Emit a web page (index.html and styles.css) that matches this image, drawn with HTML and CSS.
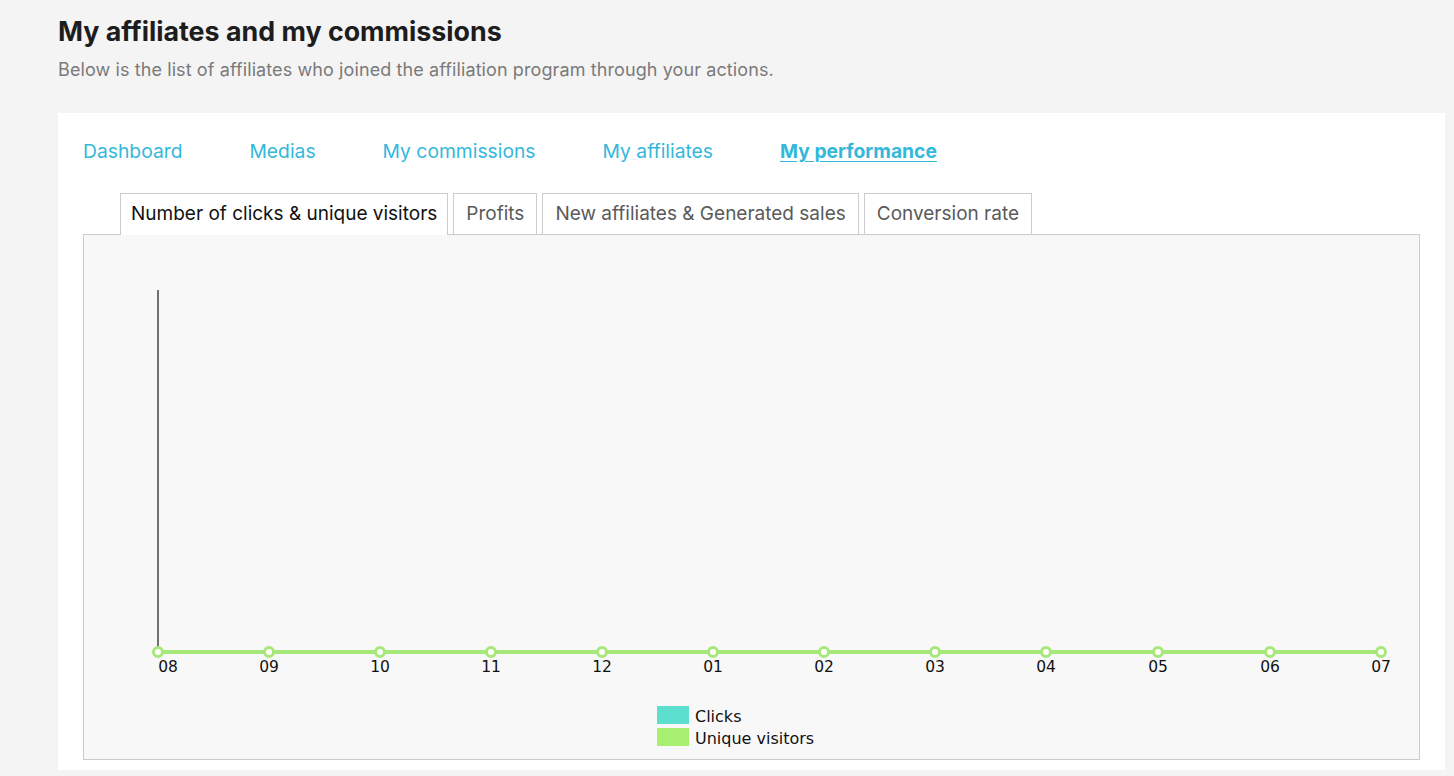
FILE: index.html
```html
<!DOCTYPE html>
<html lang="en">
<head>
<meta charset="utf-8">
<title>My affiliates and my commissions</title>
<link rel="stylesheet" href="styles.css">
</head>
<body>
<div class="page">
  <header class="page-head">
    <h1 class="page-title">My affiliates and my commissions</h1>
    <p class="page-sub">Below is the list of affiliates who joined the affiliation program through your actions.</p>
  </header>

  <section class="card">
    <nav class="main-nav">
      <a class="nav-link" href="#">Dashboard</a>
      <a class="nav-link" href="#">Medias</a>
      <a class="nav-link" href="#">My commissions</a>
      <a class="nav-link" href="#">My affiliates</a>
      <a class="nav-link active" href="#">My performance</a>
    </nav>

    <div class="tabs">
      <span class="tab active">Number of clicks &amp; unique visitors</span>
      <span class="tab">Profits</span>
      <span class="tab">New affiliates &amp; Generated sales</span>
      <span class="tab">Conversion rate</span>
    </div>

    <div class="chart-box">
      <svg class="chart" width="1334" height="524" viewBox="0 0 1334 524">
        <!-- y axis -->
        <line x1="74" y1="55" x2="74" y2="417" stroke="#444" stroke-width="1.5"/>
        <!-- clicks series (flat, hidden under visitors) -->
        <polyline fill="none" stroke="#5ddfd0" stroke-width="4"
          points="74,417 185,417 296,417 407,417 518,417 629,417 740,417 851,417 962,417 1074,417 1186,417 1297,417"/>
        <!-- unique visitors series -->
        <polyline fill="none" stroke="#a6e87a" stroke-width="4"
          points="74,417 185,417 296,417 407,417 518,417 629,417 740,417 851,417 962,417 1074,417 1186,417 1297,417"/>
        <g fill="#fff" stroke="#a6e87a" stroke-width="3">
          <circle cx="74" cy="417" r="4.5"/>
          <circle cx="185" cy="417" r="4.5"/>
          <circle cx="296" cy="417" r="4.5"/>
          <circle cx="407" cy="417" r="4.5"/>
          <circle cx="518" cy="417" r="4.5"/>
          <circle cx="629" cy="417" r="4.5"/>
          <circle cx="740" cy="417" r="4.5"/>
          <circle cx="851" cy="417" r="4.5"/>
          <circle cx="962" cy="417" r="4.5"/>
          <circle cx="1074" cy="417" r="4.5"/>
          <circle cx="1186" cy="417" r="4.5"/>
          <circle cx="1297" cy="417" r="4.5"/>
        </g>
        <g class="axis-labels" text-anchor="middle">
          <text x="84" y="437">08</text>
          <text x="185" y="437">09</text>
          <text x="296" y="437">10</text>
          <text x="407" y="437">11</text>
          <text x="518" y="437">12</text>
          <text x="629" y="437">01</text>
          <text x="740" y="437">02</text>
          <text x="851" y="437">03</text>
          <text x="962" y="437">04</text>
          <text x="1074" y="437">05</text>
          <text x="1186" y="437">06</text>
          <text x="1297" y="437">07</text>
        </g>
        <g class="legend">
          <rect x="573" y="471" width="32" height="18" fill="#5ddfd0"/>
          <text x="611" y="487">Clicks</text>
          <rect x="573" y="493" width="32" height="18" fill="#a8ee70"/>
          <text x="611" y="509">Unique visitors</text>
        </g>
      </svg>
    </div>
  </section>
</div>
</body>
</html>
```

FILE: styles.css
```css
html, body {
  margin: 0;
  padding: 0;
  background: #f4f4f4;
}

body {
  font-family: Inter, "Noto Sans", Arial, sans-serif;
  color: #1c1c1c;
}

.page {
  padding: 14px 9px 0 58px;
}

.page-title {
  margin: 0;
  font-size: 26.8px;
  line-height: 34px;
  font-weight: 700;
  color: #1d1d1d;
}

.page-sub {
  margin: 10px 0 0;
  font-size: 18px;
  line-height: 24px;
  letter-spacing: 0.1px;
  color: #7a7a7a;
}

.card {
  margin-top: 31px;
  background: #fff;
  padding: 25px 25px 10px;
}

.main-nav {
  display: flex;
  gap: 67px;
  line-height: 26px;
}

.nav-link {
  font-size: 19.3px;
  color: #33b8dc;
  text-decoration: none;
}

.nav-link.active {
  font-weight: 700;
  text-decoration: underline;
  text-underline-offset: 3px;
}

.tabs {
  display: flex;
  gap: 5px;
  margin: 29px 0 0 37px;
  position: relative;
  z-index: 1;
}

.tab {
  display: block;
  height: 40px;
  line-height: 40px;
  padding: 0 12px;
  border: 1px solid #cccccc;
  border-bottom: none;
  font-size: 19px;
  color: #5a5a5a;
  background: #fff;
}

.tab.active {
  color: #111;
  height: 41px;
  padding: 0 10px;
  margin-bottom: -1px;
}

.chart-box {
  border: 1px solid #cccccc;
  background: #f8f8f8;
  height: 524px;
}

.chart {
  display: block;
}

.axis-labels text,
.legend text {
  font-family: "DejaVu Sans", Verdana, sans-serif;
  font-size: 15.5px;
  fill: #111;
}

.legend text {
  font-size: 16px;
}
```
